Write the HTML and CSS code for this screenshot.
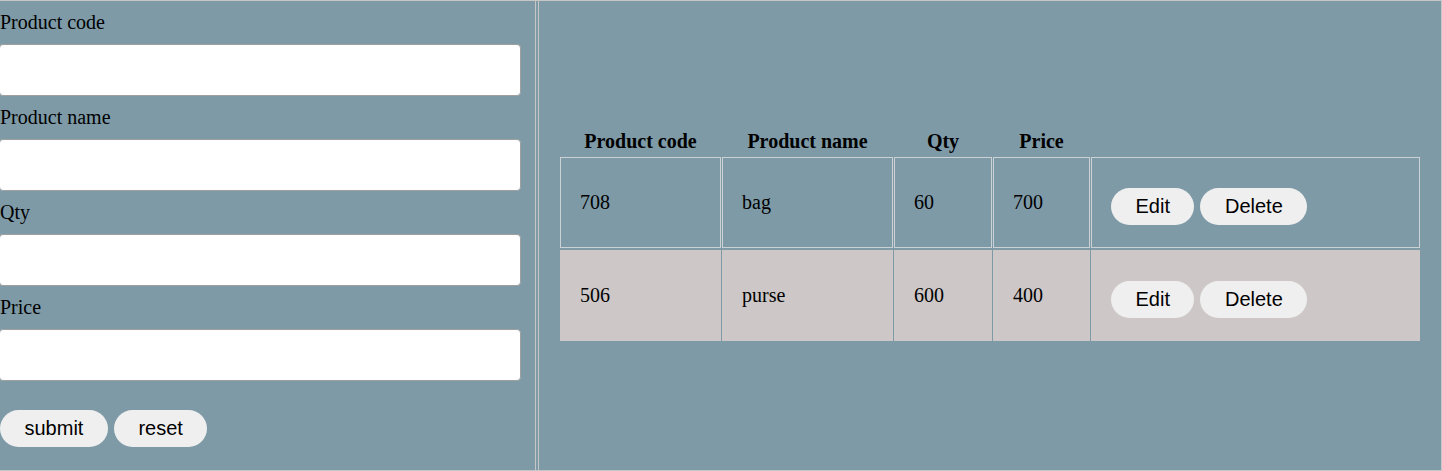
FILE: index.html
```html
<!DOCTYPE html>
<html>
<head>
<meta charset="utf-8">
<link rel="stylesheet" href="styles.css">
</head>
<body>
<div class="page">
  <div class="form-panel">
    <label class="field-label">Product code</label>
    <input class="field-input" type="text">
    <label class="field-label">Product name</label>
    <input class="field-input" type="text">
    <label class="field-label">Qty</label>
    <input class="field-input" type="text">
    <label class="field-label">Price</label>
    <input class="field-input" type="text">
    <div class="actions">
      <button class="pill">submit</button>
      <button class="pill">reset</button>
    </div>
  </div>
  <div class="list-panel">
    <table class="products">
      <thead>
        <tr>
          <th class="c1">Product code</th>
          <th class="c2">Product name</th>
          <th class="c3">Qty</th>
          <th class="c4">Price</th>
          <th class="c5"></th>
        </tr>
      </thead>
      <tbody>
        <tr class="row-a">
          <td>708</td>
          <td>bag</td>
          <td>60</td>
          <td>700</td>
          <td class="ops"><button class="pill">Edit</button><button class="pill">Delete</button></td>
        </tr>
        <tr class="row-b">
          <td>506</td>
          <td>purse</td>
          <td>600</td>
          <td>400</td>
          <td class="ops"><button class="pill">Edit</button><button class="pill">Delete</button></td>
        </tr>
      </tbody>
    </table>
  </div>
</div>
</body>
</html>
```

FILE: styles.css
```css
html, body {
  margin: 0;
  padding: 0;
  background: #7e9aa7;
}
body {
  font-family: "Liberation Serif", "Times New Roman", serif;
  font-size: 20px;
  color: #000;
}
.page {
  display: flex;
  gap: 2px;
  height: 471px;
  box-sizing: border-box;
  border-top: 1px solid #c6c6c6;
  border-bottom: 1px solid #c6c6c6;
  width: 1442px;
}
.form-panel {
  width: 536px;
  box-sizing: border-box;
  border-right: 1px solid #c6c6c6;
  padding-top: 10px;
  display: flex;
  flex-direction: column;
  align-items: flex-start;
}
.field-label {
  display: block;
  line-height: 23px;
  margin-bottom: 10px;
}
.field-input {
  display: block;
  width: 522px;
  height: 52px;
  box-sizing: border-box;
  margin: 0 0 10px -1px;
  border: 1px solid #9f9f9f;
  border-radius: 4px;
  background: #fff;
  padding: 0 8px;
  font-size: 18px;
}
.actions {
  margin-top: 19px;
  display: flex;
  gap: 6px;
}
.pill {
  font-family: "Liberation Sans", Arial, sans-serif;
  font-size: 20px;
  line-height: 23px;
  color: #000;
  background: #efefef;
  border: none;
  border-radius: 20px;
  padding: 7px 24.5px;
  margin: 0;
}
.list-panel {
  flex: 1;
  box-sizing: border-box;
  border-left: 1px solid #c6c6c6;
  border-right: 1px solid #c6c6c6;
  display: flex;
  align-items: center;
  padding-left: 20px;
}
.products {
  border-collapse: separate;
  border-spacing: 1px 2px;
}
.products th {
  font-weight: bold;
  text-align: center;
  padding: 0 0 2px 0;
  line-height: 23px;
}
.products td {
  padding: 20px 19px;
  height: 49px;
  line-height: 23px;
  vertical-align: middle;
  text-align: left;
}
.products td.ops {
  padding-top: 24px;
  padding-bottom: 16px;
}
.products .c1 { width: 161px; }
.products .c2 { width: 171px; }
.products .c3 { width: 98px; }
.products .c4 { width: 97px; }
.products .c5 { width: 329px; }
.row-a td {
  border: 1px solid #cbd1d4;
}
.row-b td {
  border: 1px solid #cdc8c7;
  background: #cdc8c7;
}
.products td .pill {
  margin-right: 6px;
}
```
